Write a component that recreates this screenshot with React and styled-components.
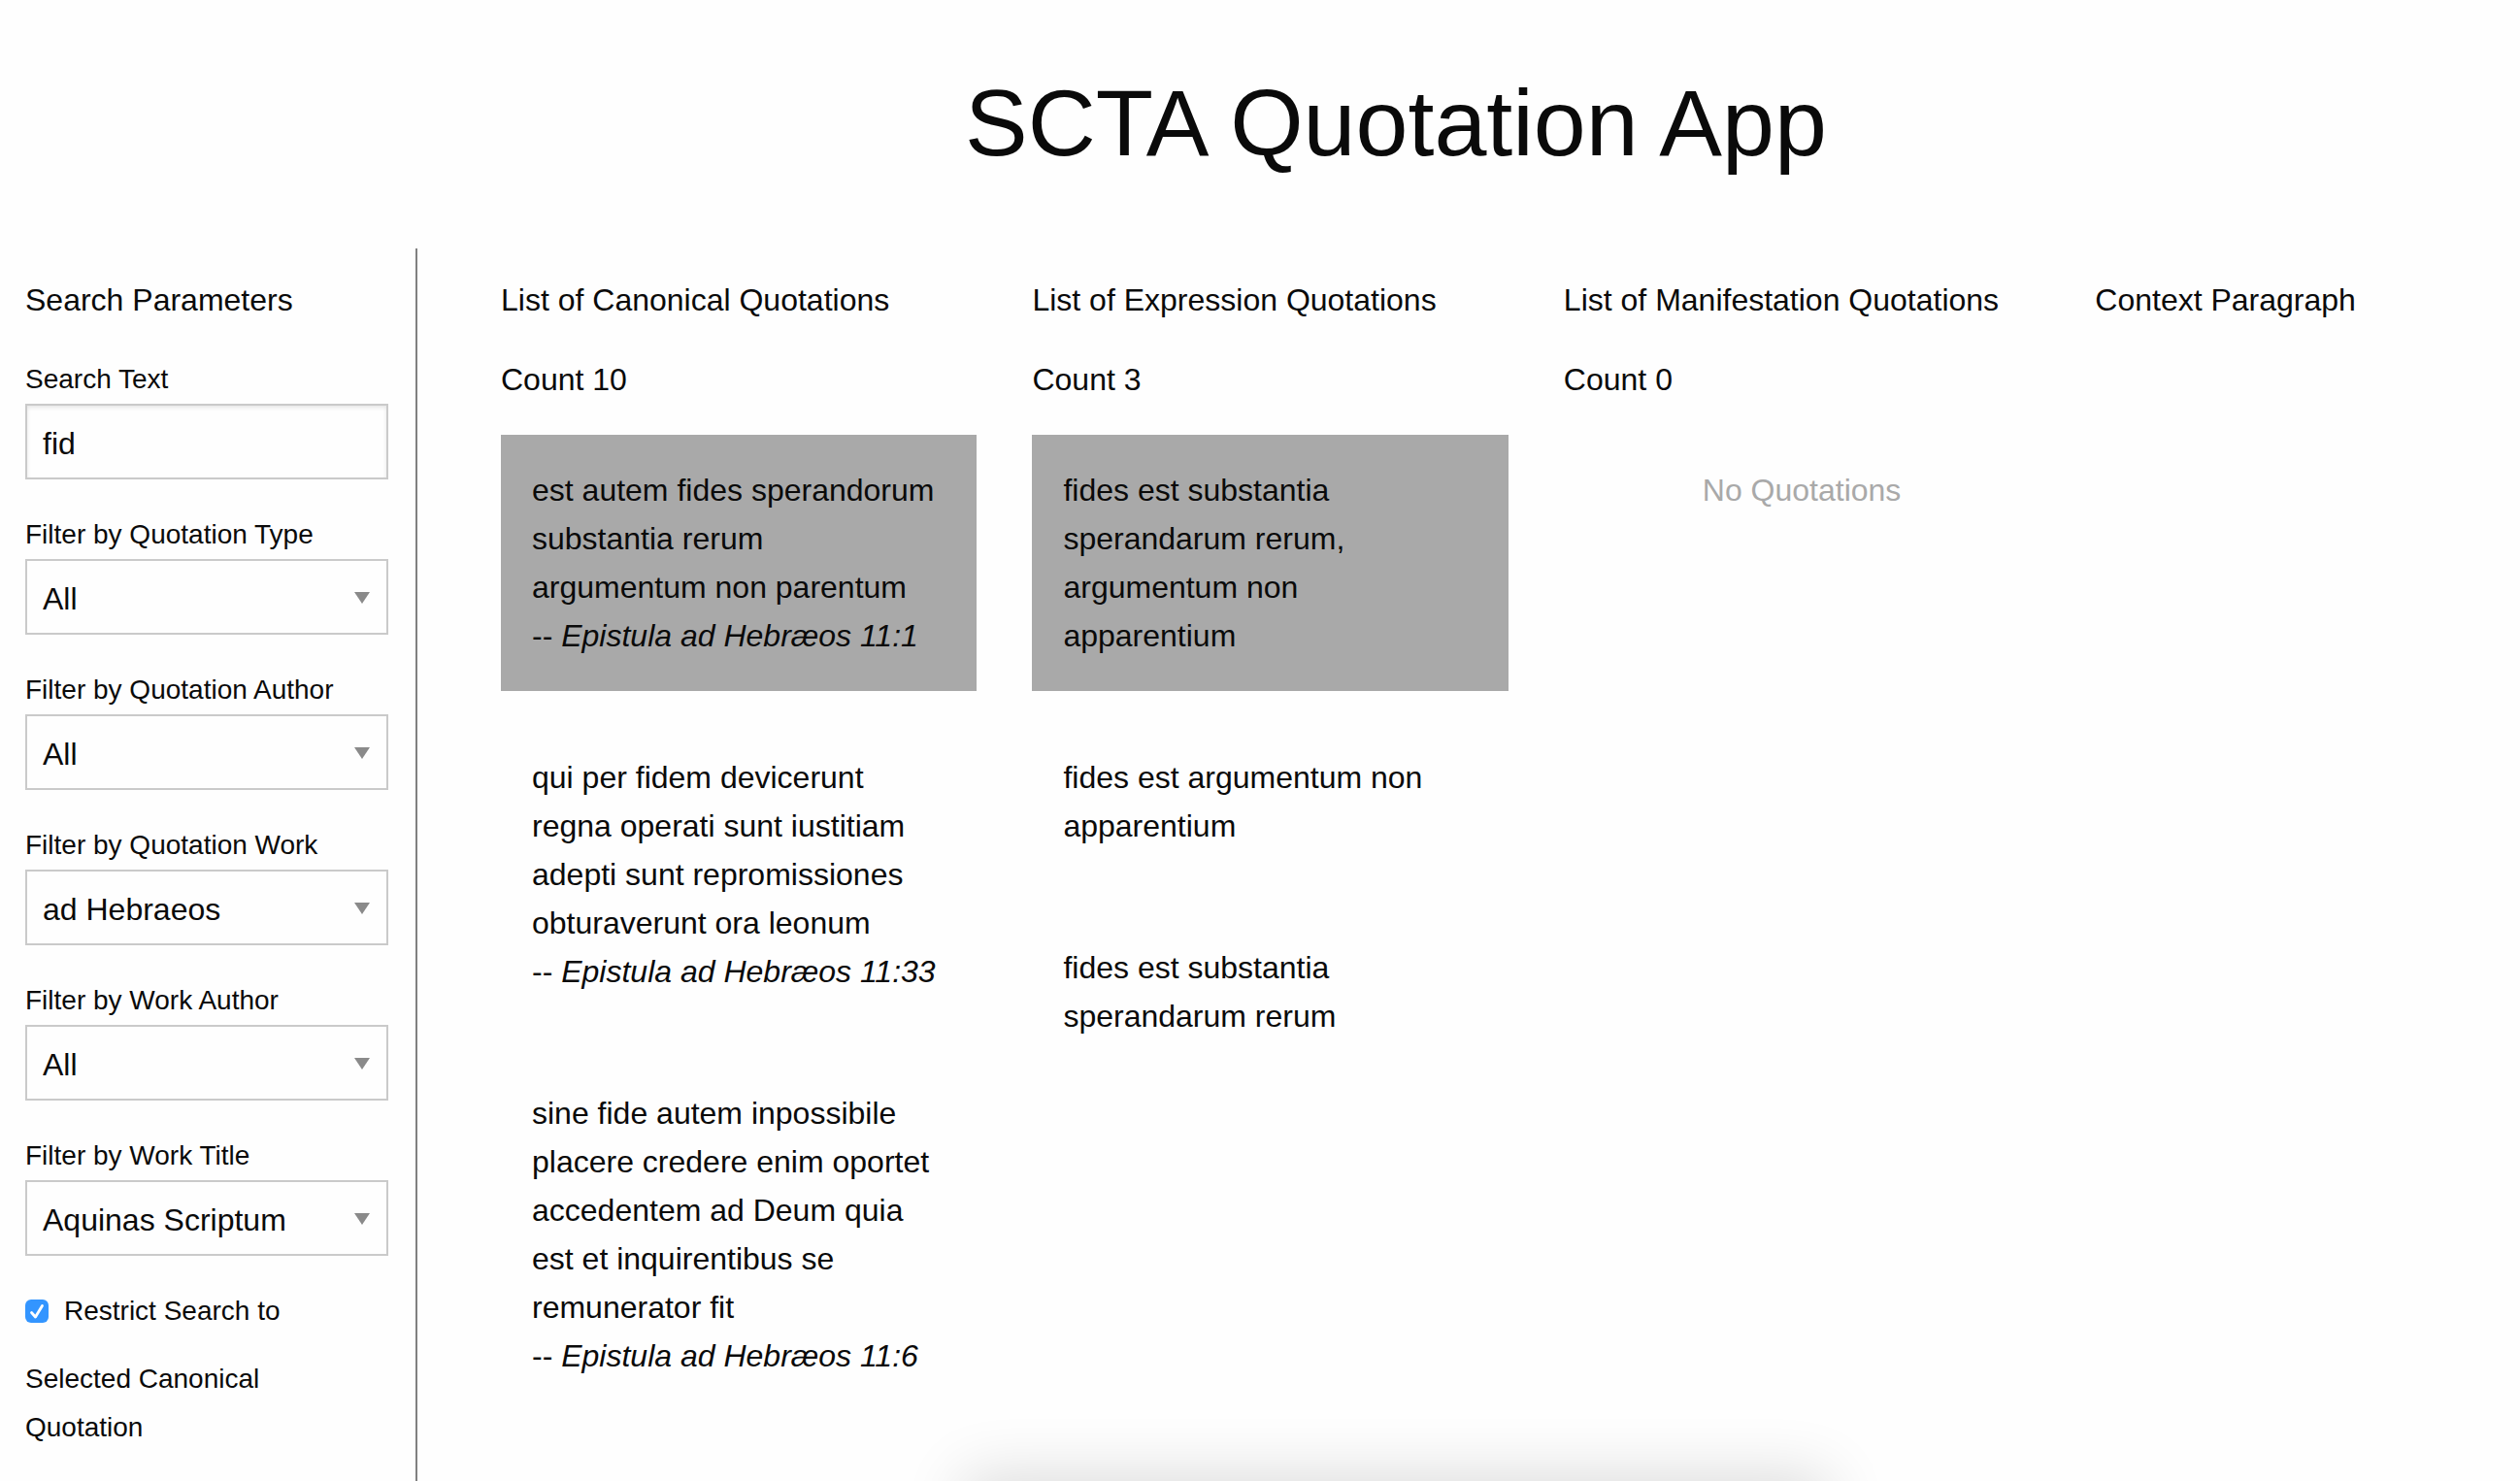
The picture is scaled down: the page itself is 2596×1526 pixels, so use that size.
import React from "react";
import styled, { createGlobalStyle } from "styled-components";

const GlobalStyle = createGlobalStyle`
  *, *::before, *::after { box-sizing: border-box; }
  body {
    margin: 0;
    background: #fefefe;
    color: #0a0a0a;
    font-family: "Helvetica Neue", "Liberation Sans", Arial, sans-serif;
    font-size: 32px;
    line-height: 50px;
  }
`;

const Page = styled.div`
  min-height: 100vh;
  display: grid;
  grid-template-rows: auto 1fr;
  overflow: hidden;
`;

const Header = styled.header`
  padding: 60px 0 62px 280px;
  text-align: center;
`;

const Title = styled.h1`
  margin: 0;
  font-size: 97px;
  font-weight: 400;
  line-height: 134px;
`;

const Body = styled.div`
  display: grid;
  grid-template-columns: 430px minmax(0, 1fr);
`;

const Sidebar = styled.aside`
  display: flex;
  flex-direction: column;
  gap: 32px;
  padding: 28px 28px 0 26px;
  border-right: 2px solid #808080;
`;

const Heading = styled.h2`
  margin: 0;
  font-size: 32px;
  font-weight: 400;
  line-height: 50px;
  white-space: nowrap;
`;

const Label = styled.label`
  display: block;
  font-size: 28px;
  white-space: nowrap;
`;

const fieldHeight = "78px";

const TextInput = styled.input`
  display: block;
  width: 100%;
  height: ${fieldHeight};
  padding: 4px 16px 0;
  border: 2px solid #cacaca;
  border-radius: 0;
  background: #fefefe;
  box-shadow: inset 0 2px 4px rgba(10, 10, 10, 0.1);
  color: inherit;
  font: inherit;
  outline: none;
`;

const SelectBox = styled.div`
  display: grid;
  align-items: center;

  &::after {
    content: "";
    grid-area: 1 / 1;
    justify-self: end;
    margin: 2px 19px 0 0;
    border: solid transparent;
    border-width: 12px 8px 0;
    border-top-color: #8a8a8a;
    pointer-events: none;
  }
`;

const Select = styled.select`
  grid-area: 1 / 1;
  appearance: none;
  width: 100%;
  height: ${fieldHeight};
  padding: 4px 48px 0 16px;
  border: 2px solid #cacaca;
  border-radius: 0;
  background: #fefefe;
  color: inherit;
  font: inherit;
  outline: none;
`;

const RestrictLabel = styled.label`
  display: flex;
  flex-direction: column;
  gap: 20px;
  font-size: 28px;
`;

const RestrictRow = styled.span`
  display: flex;
  align-items: center;
  gap: 16px;
`;

const CheckBox = styled.span`
  display: grid;
  width: 24px;
  height: 24px;

  input, svg {
    grid-area: 1 / 1;
    width: 24px;
    height: 24px;
    margin: 0;
  }
  input {
    appearance: none;
    border-radius: 6px;
    border: 1px solid #bbb;
    background: #fff;
  }
  input:checked {
    border: 0;
    background: #3395ff;
  }
  svg {
    pointer-events: none;
    visibility: hidden;
  }
  input:checked + svg { visibility: visible; }
`;

const Columns = styled.main`
  display: grid;
  grid-template-columns: repeat(3, minmax(0, 6fr)) minmax(0, 5fr);
  column-gap: 57px;
  align-items: start;
  padding: 28px 29px 0 86px;
`;

const Column = styled.section`
  display: flex;
  flex-direction: column;
  gap: 32px;
`;

const Count = styled.p`
  margin: 0;
`;

const List = styled.ul`
  display: flex;
  flex-direction: column;
  gap: 32px;
  margin: 0;
  padding: 0;
  list-style: none;
`;

const Quotation = styled.li`
  padding: 32px;
  background: ${(p) => (p.$selected ? "#a9a9a9" : "transparent")};
  cursor: pointer;
`;

const Source = styled.span`
  display: block;
  white-space: nowrap;
`;

const Empty = styled.p`
  margin: 0;
  padding: 32px;
  color: #a9a9a9;
  text-align: center;
`;

const DockShadow = styled.div`
  position: fixed;
  left: calc(50% + 140px);
  bottom: -90px;
  width: 890px;
  height: 90px;
  margin-left: -445px;
  box-shadow: 0 -6px 64px rgba(0, 0, 0, 0.14);
  pointer-events: none;
`;

const filters = [
  { id: "type", label: "Filter by Quotation Type", value: "All" },
  { id: "author", label: "Filter by Quotation Author", value: "All" },
  { id: "work", label: "Filter by Quotation Work", value: "ad Hebraeos" },
  { id: "work-author", label: "Filter by Work Author", value: "All" },
  { id: "work-title", label: "Filter by Work Title", value: "Aquinas Scriptum" },
];

const columns = [
  {
    title: "List of Canonical Quotations",
    count: 10,
    items: [
      {
        text: "est autem fides sperandorum substantia rerum argumentum non parentum",
        source: "Epistula ad Hebræos 11:1",
      },
      {
        text: "qui per fidem devicerunt regna operati sunt iustitiam adepti sunt repromissiones obturaverunt ora leonum",
        source: "Epistula ad Hebræos 11:33",
      },
      {
        text: "sine fide autem inpossibile placere credere enim oportet accedentem ad Deum quia est et inquirentibus se remunerator fit",
        source: "Epistula ad Hebræos 11:6",
      },
    ],
  },
  {
    title: "List of Expression Quotations",
    count: 3,
    items: [
      { text: "fides est substantia sperandarum rerum, argumentum non apparentium" },
      { text: "fides est argumentum non apparentium" },
      { text: "fides est substantia sperandarum rerum" },
    ],
  },
  { title: "List of Manifestation Quotations", count: 0, items: [] },
];

function Filter({ id, label, value }) {
  return (
    <div>
      <Label htmlFor={id}>{label}</Label>
      <SelectBox>
        <Select id={id} defaultValue={value}>
          {value !== "All" && <option>All</option>}
          <option>{value}</option>
        </Select>
      </SelectBox>
    </div>
  );
}

function QuotationColumn({ title, count, items }) {
  return (
    <Column>
      <Heading>{title}</Heading>
      <Count>Count {count}</Count>
      {items.length === 0 ? (
        <Empty>No Quotations</Empty>
      ) : (
        <List>
          {items.map((item, i) => (
            <Quotation key={item.text} $selected={i === 0}>
              {item.text}
              {item.source && (
                <Source>
                  -- <em>{item.source}</em>
                </Source>
              )}
            </Quotation>
          ))}
        </List>
      )}
    </Column>
  );
}

export default function App() {
  return (
    <>
      <GlobalStyle />
      <Page>
        <Header>
          <Title>SCTA Quotation App</Title>
        </Header>
        <Body>
          <Sidebar>
            <Heading>Search Parameters</Heading>
            <div>
              <Label htmlFor="search-text">Search Text</Label>
              <TextInput id="search-text" type="text" defaultValue="fid" />
            </div>
            {filters.map((f) => (
              <Filter key={f.id} {...f} />
            ))}
            <RestrictLabel>
              <RestrictRow>
                <CheckBox>
                  <input type="checkbox" defaultChecked />
                  <svg viewBox="0 0 24 24" fill="none" aria-hidden="true">
                    <path
                      d="M6.5 13.5l4 4.5L17.5 6.5"
                      stroke="#fff"
                      strokeWidth="2.8"
                      strokeLinecap="round"
                      strokeLinejoin="round"
                    />
                  </svg>
                </CheckBox>
                Restrict Search to
              </RestrictRow>
              <span>
                Selected Canonical
                <br />
                Quotation
              </span>
            </RestrictLabel>
          </Sidebar>
          <Columns>
            {columns.map((c) => (
              <QuotationColumn key={c.title} {...c} />
            ))}
            <Column>
              <Heading>Context Paragraph</Heading>
            </Column>
          </Columns>
        </Body>
      </Page>
      <DockShadow />
    </>
  );
}
